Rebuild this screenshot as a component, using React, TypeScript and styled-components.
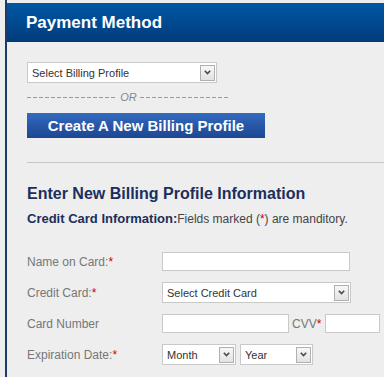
import React from 'react';
import styled, { createGlobalStyle } from 'styled-components';

const GlobalStyle = createGlobalStyle`
  html, body {
    margin: 0;
    padding: 0;
    background: #eeeeee;
  }
  body {
    font-family: "Liberation Sans", Arial, Helvetica, sans-serif;
  }
`;

interface DropdownProps {
  label: string;
  width: number;
}

const Dropdown = ({ label, width }: DropdownProps) => (
  <SelectBox $width={width}>
    <SelectText>{label}</SelectText>
    <ArrowButton>
      <svg width="7" height="5" viewBox="0 0 7 5">
        <path d="M0.8 0.8 L3.5 3.6 L6.2 0.8" stroke="#4a4a4a" strokeWidth="1.6" fill="none" />
      </svg>
    </ArrowButton>
  </SelectBox>
);

const Required = () => <Star>*</Star>;

const App = () => {
  return (
    <>
      <GlobalStyle />
      <Panel>
        <Header>Payment Method</Header>
        <Content>
          <Dropdown label="Select Billing Profile" width={190} />
          <OrRow>
            <DashLine />
            <OrText>OR</OrText>
            <DashLine />
          </OrRow>
          <CreateButton>Create A New Billing Profile</CreateButton>
          <Rule />
          <SectionTitle>Enter New Billing Profile Information</SectionTitle>
          <InfoLine>
            <InfoStrong>Credit Card Information:</InfoStrong>
            Fields marked (<Star>*</Star>) are manditory.
          </InfoLine>
          <Form>
            <Row>
              <Label>
                Name on Card:<Required />
              </Label>
              <TextInput $width={188} />
            </Row>
            <Row>
              <Label>
                Credit Card:<Required />
              </Label>
              <Dropdown label="Select Credit Card" width={189} />
            </Row>
            <Row>
              <Label>Card Number</Label>
              <TextInput $width={127} />
              <InlineLabel>
                CVV<Required />
              </InlineLabel>
              <TextInput $width={55} />
            </Row>
            <Row>
              <Label>
                Expiration Date:<Required />
              </Label>
              <DateGroup>
                <Dropdown label="Month" width={74} />
                <Dropdown label="Year" width={73} />
              </DateGroup>
            </Row>
          </Form>
        </Content>
      </Panel>
    </>
  );
};

const Panel = styled.div`
  margin-left: 5px;
  padding-top: 3px;
  min-height: 377px;
  box-sizing: border-box;
  border-left: 2px solid #1c3a6b;
`;

const Header = styled.div`
  height: 39px;
  display: flex;
  align-items: center;
  padding-left: 19px;
  background: linear-gradient(to bottom, #0056a3 0%, #004a91 50%, #003b79 100%);
  color: #ffffff;
  font-size: 17px;
  font-weight: 700;
`;

const Content = styled.div`
  padding: 20px 0 0 20px;
`;

const SelectBox = styled.div<{ $width: number }>`
  width: ${({ $width }) => $width}px;
  height: 21px;
  box-sizing: border-box;
  display: flex;
  align-items: center;
  padding: 0 1px 0 4px;
  background: #ffffff;
  border: 1px solid #c9c9c9;
`;

const SelectText = styled.span`
  font-size: 11px;
  color: #333333;
  white-space: nowrap;
`;

const ArrowButton = styled.span`
  margin-left: auto;
  width: 15px;
  height: 16px;
  box-sizing: border-box;
  display: flex;
  align-items: center;
  justify-content: center;
  border: 1px solid #b0b0b0;
  background: linear-gradient(to bottom, #f7f7f7, #e2e2e2);
`;

const OrRow = styled.div`
  width: 203px;
  height: 12px;
  margin-top: 8px;
  display: flex;
  align-items: center;
  gap: 3px;
`;

const DashLine = styled.span`
  flex: 1;
  height: 1px;
  background: repeating-linear-gradient(to right, #9a9a9a 0 4px, transparent 4px 6px);
`;

const OrText = styled.span`
  font-size: 11px;
  font-style: italic;
  color: #888888;
`;

const CreateButton = styled.button`
  margin-top: 10px;
  width: 238px;
  height: 25px;
  padding: 0;
  display: block;
  border: none;
  background: linear-gradient(to bottom, #336bbf 0%, #2857a8 50%, #1d4791 100%);
  color: #ffffff;
  font-family: "Liberation Sans", Arial, sans-serif;
  font-size: 15px;
  font-weight: 700;
  cursor: pointer;
`;

const Rule = styled.div`
  margin-top: 24px;
  border-top: 1px solid #c6c6c6;
`;

const SectionTitle = styled.h2`
  margin: 22px 0 0;
  font-size: 16px;
  line-height: 18px;
  font-weight: 700;
  color: #1b2e5c;
`;

const InfoLine = styled.div`
  margin-top: 8px;
  line-height: 16px;
  font-size: 12px;
  color: #444444;
`;

const InfoStrong = styled.span`
  font-size: 13px;
  font-weight: 700;
  color: #1b2e5c;
`;

const Star = styled.span`
  color: #cc0000;
`;

const Form = styled.div`
  margin-top: 24px;
  display: flex;
  flex-direction: column;
  gap: 10px;
`;

const Row = styled.div`
  height: 21px;
  display: flex;
  align-items: center;
`;

const Label = styled.span`
  width: 135px;
  flex-shrink: 0;
  font-size: 12px;
  color: #777777;
`;

const InlineLabel = styled.span`
  margin: 0 4px 0 3px;
  font-size: 12px;
  color: #777777;
`;

const TextInput = styled.input<{ $width: number }>`
  width: ${({ $width }) => $width}px;
  height: 19px;
  box-sizing: border-box;
  padding: 0 4px;
  border: 1px solid #c9c9c9;
  background: #ffffff;
  outline: none;
`;

const DateGroup = styled.div`
  display: flex;
  gap: 4px;
`;

export default App;
